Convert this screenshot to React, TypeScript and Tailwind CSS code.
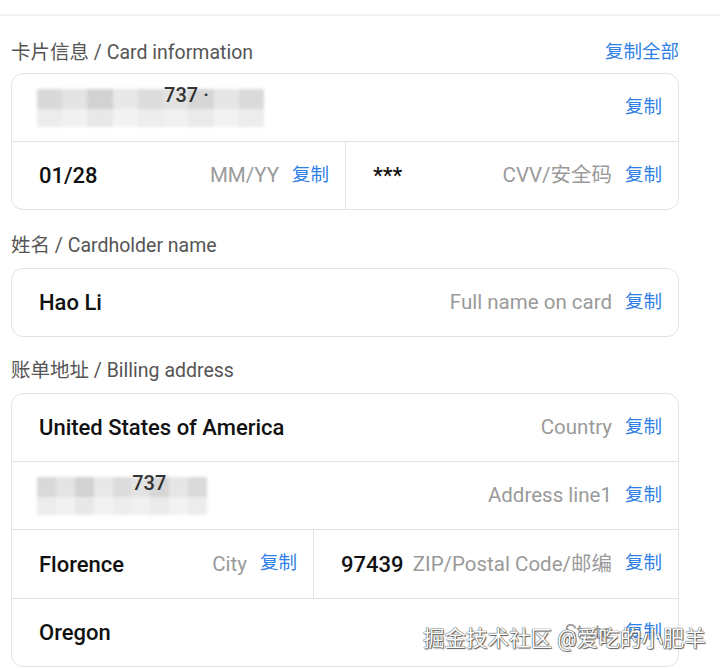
import React from "react";

const font = { fontFamily: 'Roboto, "Noto Sans CJK SC", sans-serif' };

function Copy() {
  return <span className="text-[18.5px] text-[#2f80e6] shrink-0">复制</span>;
}

function Blurred({ width, digits }: { width: number; digits: string }) {
  const tiles = ["#d9d9d9", "#e4e4e4", "#d2d2d2", "#e8e8e8", "#dcdcdc", "#e2e2e2", "#d6d6d6", "#e6e6e6", "#dadada"];
  return (
    <div className="relative h-[38px]" style={{ width }}>
      <div className="absolute inset-0 flex flex-col blur-[1.5px]">
        <div className="flex h-[20px]">
          {tiles.map((c, i) => (
            <div key={i} className="flex-1" style={{ background: c }} />
          ))}
        </div>
        <div className="flex h-[18px] rounded-bl-[30px]">
          {tiles.map((c, i) => (
            <div key={i} className="flex-1 opacity-50" style={{ background: c }} />
          ))}
        </div>
      </div>
      <span className="absolute left-[56%] top-[-9px] text-[20px] font-medium text-black/80">{digits}</span>
    </div>
  );
}

function Cell({
  value,
  placeholder,
  className = "",
}: {
  value?: React.ReactNode;
  placeholder?: string;
  className?: string;
}) {
  return (
    <div className={`flex h-[67px] items-center pl-[27px] pr-[16px] ${className}`}>
      <div className="text-[22px] font-medium text-[#111] whitespace-nowrap">{value}</div>
      <div className="flex-1" />
      {placeholder && <span className="text-[20.5px] text-[#9a9a9a] whitespace-nowrap mr-[13px]">{placeholder}</span>}
      <Copy />
    </div>
  );
}

function Label({ children, action, className = "mb-[10px]" }: { children: React.ReactNode; action?: boolean; className?: string }) {
  return (
    <div className={`flex items-center justify-between h-[24px] ${className}`}>
      <span className="text-[19.5px] text-[#555]">{children}</span>
      {action && <span className="text-[18.5px] text-[#2f80e6]">复制全部</span>}
    </div>
  );
}

export default function App() {
  return (
    <div className="relative w-[720px] h-[669px] overflow-hidden bg-white" style={font}>
      <div className="h-[16px] border-b-2 border-[#f2f2f2]" />
      <div className="w-[668px] ml-[11px] pt-[25px]">
        <Label action className="mb-[8px]">卡片信息 / Card information</Label>
        <div className="border border-[#e3e3e3] rounded-[12px] overflow-hidden">
          <div className="flex h-[68px] items-center pl-[25px] pr-[16px] border-b border-[#e3e3e3]">
            <Blurred width={227} digits="737 ·" />
            <div className="flex-1" />
            <Copy />
          </div>
          <div className="flex">
            <Cell className="w-[334px] border-r border-[#e3e3e3]" value="01/28" placeholder="MM/YY" />
            <Cell className="flex-1" value="***" placeholder="CVV/安全码" />
          </div>
        </div>

        <div className="mt-[24px]">
          <Label>姓名 / Cardholder name</Label>
          <div className="border border-[#e3e3e3] rounded-[12px] overflow-hidden">
            <Cell value="Hao Li" placeholder="Full name on card" />
          </div>
        </div>

        <div className="mt-[22px]">
          <Label>账单地址 / Billing address</Label>
          <div className="border border-[#e3e3e3] rounded-[12px] overflow-hidden">
            <Cell className="h-[68px] border-b border-[#e3e3e3]" value="United States of America" placeholder="Country" />
            <div className="flex h-[68px] items-center pl-[25px] pr-[16px] border-b border-[#e3e3e3]">
              <Blurred width={170} digits="737" />
              <div className="flex-1" />
              <span className="text-[20.5px] text-[#9a9a9a] mr-[13px]">Address line1</span>
              <Copy />
            </div>
            <div className="flex border-b border-[#e3e3e3]">
              <Cell className="h-[68px] w-[302px] border-r border-[#e3e3e3]" value="Florence" placeholder="City" />
              <Cell className="h-[68px] flex-1" value="97439" placeholder="ZIP/Postal Code/邮编" />
            </div>
            <Cell value="Oregon" placeholder="State" />
          </div>
        </div>
      </div>

      <div
        className="absolute left-[423px] top-[623px] text-[21.5px] text-white whitespace-nowrap"
        style={{ textShadow: "0 0 1px #444, 0 0 1px #444, 1px 1px 1px #666" }}
      >
        掘金技术社区 @爱吃的小肥羊
      </div>
    </div>
  );
}
